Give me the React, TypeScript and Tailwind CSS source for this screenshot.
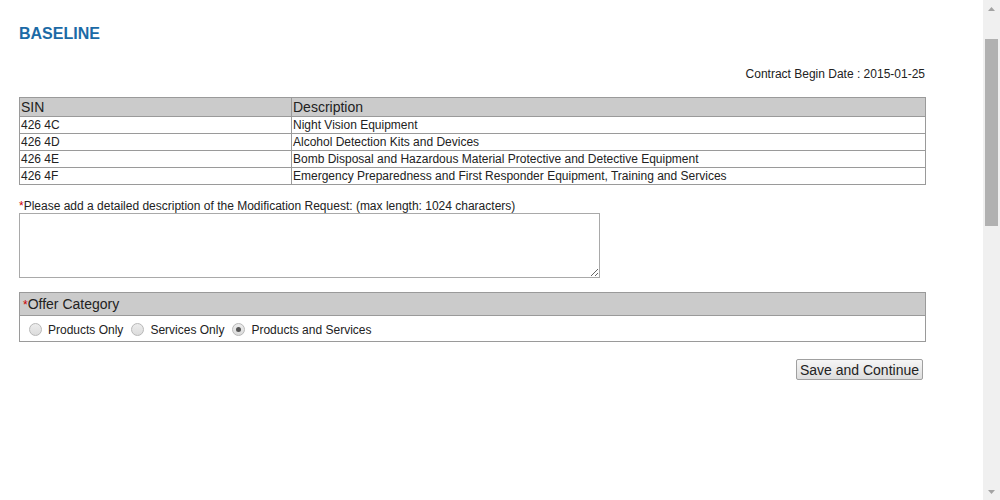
import React from "react";

const rows = [
  ["426 4C", "Night Vision Equipment"],
  ["426 4D", "Alcohol Detection Kits and Devices"],
  ["426 4E", "Bomb Disposal and Hazardous Material Protective and Detective Equipment"],
  ["426 4F", "Emergency Preparedness and First Responder Equipment, Training and Services"],
];

function Radio({ checked }: { checked?: boolean }) {
  return (
    <span className="inline-flex items-center justify-center w-[13px] h-[13px] rounded-full border border-[#b8b8b8] bg-gradient-to-b from-[#ececec] to-[#dcdcdc]">
      {checked && <span className="w-[5px] h-[5px] rounded-full bg-[#555]" />}
    </span>
  );
}

export default function App() {
  return (
    <div className="flex w-[1000px] h-[500px] overflow-hidden bg-white text-[#222]" style={{ fontFamily: '"Liberation Sans", Arial, sans-serif' }}>
      <div className="flex-1 pl-[19px]">
        <div className="w-[907px]">
          <h1 className="pt-[25px] text-[16px] leading-[18px] font-bold text-[#1b6aa6]">BASELINE</h1>
          <div className="mt-[24px] text-right text-[12px] leading-[14px] pr-[1px]">Contract Begin Date : 2015-01-25</div>
          <table className="mt-[16px] w-full border-collapse border border-[#9a9a9a] text-[12px]">
            <thead>
              <tr className="bg-[#cbcbcb] h-[19px]">
                <th className="w-[272px] border border-[#9a9a9a] px-[1px] text-left font-normal text-[14px] leading-[17px] py-0">SIN</th>
                <th className="border border-[#9a9a9a] px-[1px] text-left font-normal text-[14px] leading-[17px] py-0">Description</th>
              </tr>
            </thead>
            <tbody>
              {rows.map(([a, b]) => (
                <tr key={a} className="h-[17px]">
                  <td className="border border-[#9a9a9a] px-[1px] leading-[14px] py-0">{a}</td>
                  <td className="border border-[#9a9a9a] px-[1px] leading-[14px] py-0">{b}</td>
                </tr>
              ))}
            </tbody>
          </table>
          <div className="mt-[14px] text-[12px] leading-[14px]">
            <span className="text-[#cc0000]">*</span>Please add a detailed description of the Modification Request: (max length: 1024 characters)
          </div>
          <textarea className="block w-[581px] h-[65px] border border-[#a9a9a9] resize-y" />
          <div className="mt-[14px] border border-[#9a9a9a]">
            <div className="bg-[#cbcbcb] h-[23px] px-[3px] flex items-center text-[14px] border-b border-[#9a9a9a]">
              <span className="text-[#cc0000] text-[12px] self-start mt-[3px]">*</span>Offer Category
            </div>
            <div className="h-[25px] flex items-center pt-[2px] px-[9px] text-[12px] gap-[6px]">
              <Radio />
              <span className="mr-[2px]">Products Only</span>
              <Radio />
              <span className="mr-[2px]">Services Only</span>
              <Radio checked />
              <span>Products and Services</span>
            </div>
          </div>
          <div className="mt-[17px] flex justify-end pr-[3px]">
            <button className="h-[21px] px-[3px] text-[14px] leading-[16px] border border-[#a0a0a0] rounded-[2px] bg-gradient-to-b from-[#f6f6f6] to-[#dddddd]">Save and Continue</button>
          </div>
        </div>
      </div>
      <div className="w-[17px] h-full bg-[#f0f0f0] flex flex-col items-center">
        <div className="h-[17px] flex items-center justify-center">
          <svg width="7" height="4" viewBox="0 0 7 4"><path d="M0 4 L3.5 0 L7 4 Z" fill="#a3a3a3" /></svg>
        </div>
        <div className="mt-[22px] w-[13px] h-[187px] bg-[#b1b1b1]" />
        <div className="flex-1" />
        <div className="h-[17px] flex items-center justify-center">
          <svg width="7" height="4" viewBox="0 0 7 4"><path d="M0 0 L3.5 4 L7 0 Z" fill="#a3a3a3" /></svg>
        </div>
      </div>
    </div>
  );
}
